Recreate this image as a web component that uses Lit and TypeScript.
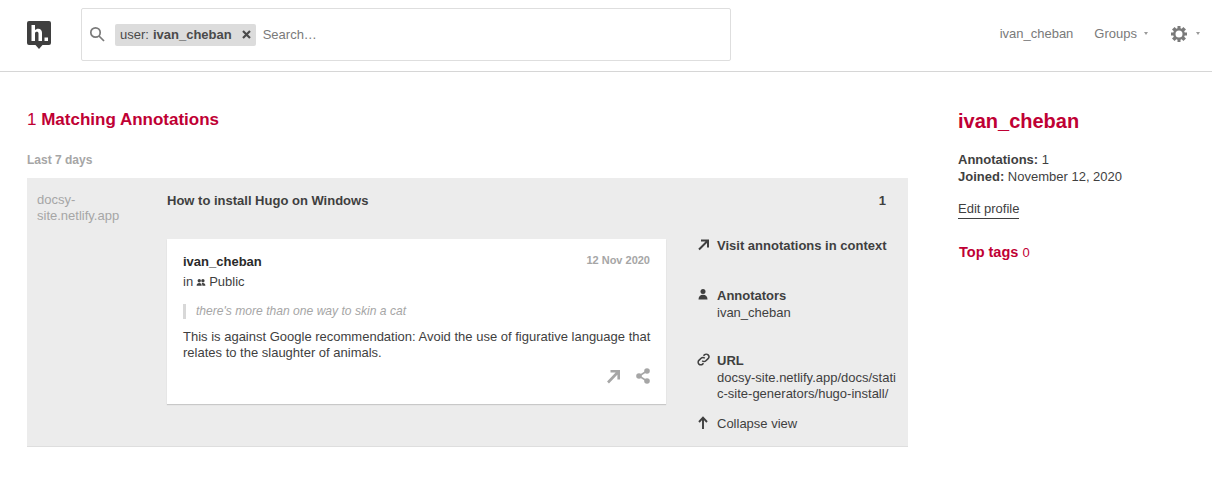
import { LitElement, html, css } from "lit";
import { customElement } from "lit/decorators.js";

@customElement("app-root")
export class AppRoot extends LitElement {
  static styles = css`
    :host { display: block; width: 1212px; height: 495px; overflow: hidden; background: #fff; color: #3f3f3f; font: 13px/17px "Liberation Sans", Arial, sans-serif; }
    * { box-sizing: border-box; }
    svg { display: block; flex: none; }
    .top { height: 72px; border-bottom: 1px solid #d6d6d6; display: flex; padding: 8px 0 0 27px; }
    .logo { width: 24px; height: 28px; margin: 13px 30px 0 0; }
    .search { width: 650px; height: 53px; border: 1px solid #dedede; border-radius: 2px; display: flex; align-items: center; padding-left: 7px; color: #7a7a7a; }
    .search svg.mag { margin: -2px 10px 0 0; }
    .chip { height: 22px; background: #dcdcdc; border-radius: 2px; display: flex; align-items: center; padding: 0 5px; color: #4a4a4a; margin-right: 7px; }
    .chip b { margin-left: 4px; font-weight: 700; }
    .chip svg { margin-left: 10px; }
    .ph { font-size: 13px; }
    .nav { margin-left: auto; display: flex; align-items: center; height: 51px; color: #7a7a7a; }
    .nav .groups { margin-left: 21px; }
    .caret { width: 0; height: 0; border: 2px solid transparent; border-top: 3px solid #9a9a9a; border-bottom: 0; margin-left: 7px; }
    .gear { margin-left: 23px; }
    .nav .last { margin: 0 12px 0 9px; }
    .body { display: flex; padding-left: 27px; }
    .main { width: 881px; }
    h1 { margin: 37px 0 0; font: 700 17px/22px "Liberation Sans", Arial, sans-serif; color: #bf0034; }
    h1 span { font-weight: 400; }
    .when { margin-top: 21px; font: 700 12px/17px "Liberation Sans", Arial, sans-serif; color: #a6a6a6; }
    .group { margin-top: 9px; height: 269px; background: #ececec; border-bottom: 1px solid #dedede; display: flex; padding: 14px 0 0 10px; }
    .domain { width: 130px; color: #a6a6a6; font-size: 13px; line-height: 16px; }
    .gmain { width: 741px; }
    .ghead { display: flex; justify-content: space-between; font-weight: 700; font-size: 13px; line-height: 17px; padding-right: 22px; margin-bottom: 30px; color: #3f3f3f; }
    .row { display: flex; }
    .card { width: 499px; height: 165px; background: #fff; box-shadow: 0 1px 1px rgba(0,0,0,.15); padding: 14px 16px 0; display: flex; flex-direction: column; }
    .cardtop { display: flex; justify-content: space-between; }
    .user { font-weight: 700; color: #2a2a2a; font-size: 13px; line-height: 17px; }
    .date { font-size: 11px; font-weight: 700; color: #a6a6a6; line-height: 15px; }
    .in { display: flex; align-items: center; line-height: 20px; gap: 3px; margin-top: 2px; }
    blockquote { margin: 12px 0 0; border-left: 3px solid #d8d8d8; padding-left: 10px; font-style: italic; font-size: 12.1px; line-height: 15px; color: #a6a6a6; }
    .text { margin: 10px -6px 0 0; font-size: 13px; line-height: 16px; }
    .actions { display: flex; justify-content: flex-end; align-items: center; gap: 15px; margin-top: 7px; }
    .side { margin-left: 31px; width: 195px; }
    .item { display: flex; gap: 7px; }
    .item svg { margin-top: 1px; }
    .item .t { font-weight: 700; }
    .url { width: 180px; word-break: break-all; line-height: 16px; margin-top: 1px; }
    .i1 { margin-top: -2px; height: 50px; }
    .i2 { height: 65px; }
    .i3 { height: 63px; }
    .aside { margin-left: 50px; }
    .aside h2 { margin: 36px 0 0; font: 700 20px/26px "Liberation Sans", Arial, sans-serif; color: #bf0034; }
    .stats { margin-top: 17px; }
    .stats b { font-weight: 700; }
    .edit { display: inline-block; margin-top: 16px; border-bottom: 1px solid #3f3f3f; line-height: 16px; padding-bottom: 1px; }
    .tags { margin: 24px 0 0 1px; font: 700 14.5px/18px "Liberation Sans", Arial, sans-serif; color: #bf0034; }
    .tags span { font-weight: 400; font-size: 13px; }
  `;

  render() {
    return html`
      <div class="top">
        <svg class="logo" viewBox="0 0 24 28"><path d="M2 0h20a2 2 0 0 1 2 2v20a2 2 0 0 1-2 2h-6.500L12 28l-3.500-4H2a2 2 0 0 1-2-2V2a2 2 0 0 1 2-2z" fill="#3f3f3f"/><path d="M4.500 4H8v5.200c.9-1 2-1.500 3.300-1.500 2.500 0 3.700 1.700 3.700 4V20h-3.500v-7.500c0-1.200-.6-1.800-1.700-1.800S8 11.300 8 12.500V20H4.500z" fill="#fff"/><rect x="17.500" y="16.500" width="3.500" height="3.500" fill="#fff"/></svg>
        <div class="search">
          <svg class="mag" width="16" height="16" viewBox="0 0 16 16" fill="none" stroke="#7a7a7a" stroke-width="1.700"><circle cx="6.500" cy="6.500" r="4.700"/><path d="M10 10l5 5"/></svg>
          <div class="chip">user:<b>ivan_cheban</b>
            <svg width="9" height="9" viewBox="0 0 9 9" stroke="#4a4a4a" stroke-width="2.200"><path d="M1 1l7 7M8 1l-7 7"/></svg>
          </div>
          <span class="ph">Search…</span>
        </div>
        <div class="nav">
          <span>ivan_cheban</span>
          <span class="groups">Groups</span><i class="caret"></i>
          <svg class="gear" width="16" height="16" viewBox="0 0 16 16"><path fill="#7a7a7a" fill-rule="evenodd" d="M6.500 0h3v2.300l1.200.5L12.400 1l2.600 2.600-1.800 1.700.5 1.200H16v3h-2.300l-.5 1.200 1.800 1.700-2.600 2.600-1.700-1.800-1.200.5V16h-3v-2.300l-1.200-.5L3.600 15 1 12.400l1.800-1.700-.5-1.200H0v-3h2.300l.5-1.200L1 3.600 3.600 1l1.700 1.800 1.200-.5zM8 4.500a3.500 3.500 0 1 0 0 7 3.500 3.500 0 0 0 0-7z"/></svg>
          <i class="caret last"></i>
        </div>
      </div>
      <div class="body">
        <div class="main">
          <h1><span>1</span> Matching Annotations</h1>
          <div class="when">Last 7 days</div>
          <div class="group">
            <div class="domain">docsy-<br />site.netlify.app</div>
            <div class="gmain">
              <div class="ghead"><span>How to install Hugo on Windows</span><span>1</span></div>
              <div class="row">
                <div class="card">
                  <div class="cardtop"><span class="user">ivan_cheban</span><span class="date">12 Nov 2020</span></div>
                  <div class="in">in
                    <svg width="10" height="7" viewBox="0 0 10 8" fill="#3f3f3f"><circle cx="3" cy="2" r="1.900"/><circle cx="7.200" cy="2" r="1.900"/><path d="M0 7.800C0 5.500 1.200 4.600 3 4.600s2.800.9 2.800 3.200zM6.600 7.800c0-1.200-.2-2.200-.8-3 .4-.2.9-.2 1.400-.2 1.800 0 2.800.9 2.800 3.200z"/></svg>
                    Public</div>
                  <blockquote>there's more than one way to skin a cat</blockquote>
                  <p class="text">This is against Google recommendation: Avoid the use of figurative language that relates to the slaughter of animals.</p>
                  <div class="actions">
                    <svg width="15" height="15" viewBox="0 0 15 15" fill="none" stroke="#a6a6a6" stroke-width="2.600"><path d="M4.500 2.300h8.200v8.200M12.500 2.500L2 13.500"/></svg>
                    <svg width="14" height="16" viewBox="0 0 14 16" fill="#a6a6a6"><circle cx="11" cy="3" r="2.800"/><circle cx="3" cy="8" r="2.800"/><circle cx="11" cy="13" r="2.800"/><path d="M3 8l8-5M3 8l8 5" stroke="#a6a6a6" stroke-width="1.500"/></svg>
                  </div>
                </div>
                <div class="side">
                  <div class="item i1"><svg width="13" height="13" viewBox="0 0 13 13" fill="none" stroke="#3f3f3f" stroke-width="2"><path d="M4 2.500h7v7M11 2.500L2 11.500"/></svg><span class="t">Visit annotations in context</span></div>
                  <div class="item i2"><svg width="13" height="13" viewBox="0 0 13 13" fill="#3f3f3f"><circle cx="6" cy="3.500" r="2.500"/><path d="M1.500 11.500c0-3.200 1.700-4.800 4.500-4.800s4.500 1.600 4.500 4.800z"/></svg><div><div class="t">Annotators</div><div>ivan_cheban</div></div></div>
                  <div class="item i3"><svg width="13" height="13" viewBox="0 0 13 13" fill="none" stroke="#3f3f3f" stroke-width="1.500"><path d="M5.200 7.800a2.600 2.600 0 0 0 3.700 0l2.200-2.200a2.600 2.600 0 0 0-3.700-3.700L6.500 2.800M7.800 5.200a2.600 2.600 0 0 0-3.700 0L1.900 7.400a2.600 2.600 0 0 0 3.700 3.700l.9-.9"/></svg><div><div class="t">URL</div><div class="url">docsy-site.netlify.app/docs/static-site-generators/hugo-install/</div></div></div>
                  <div class="item"><svg width="13" height="13" viewBox="0 0 13 13" fill="none" stroke="#3f3f3f" stroke-width="1.900"><path d="M2 6l4-4.300L10 6M6 2v11"/></svg><span>Collapse view</span></div>
                </div>
              </div>
            </div>
          </div>
        </div>
        <div class="aside">
          <h2>ivan_cheban</h2>
          <div class="stats"><div><b>Annotations:</b> 1</div><div><b>Joined:</b> November 12, 2020</div></div>
          <a class="edit">Edit profile</a>
          <div class="tags">Top tags <span>0</span></div>
        </div>
      </div>
    `;
  }
}
